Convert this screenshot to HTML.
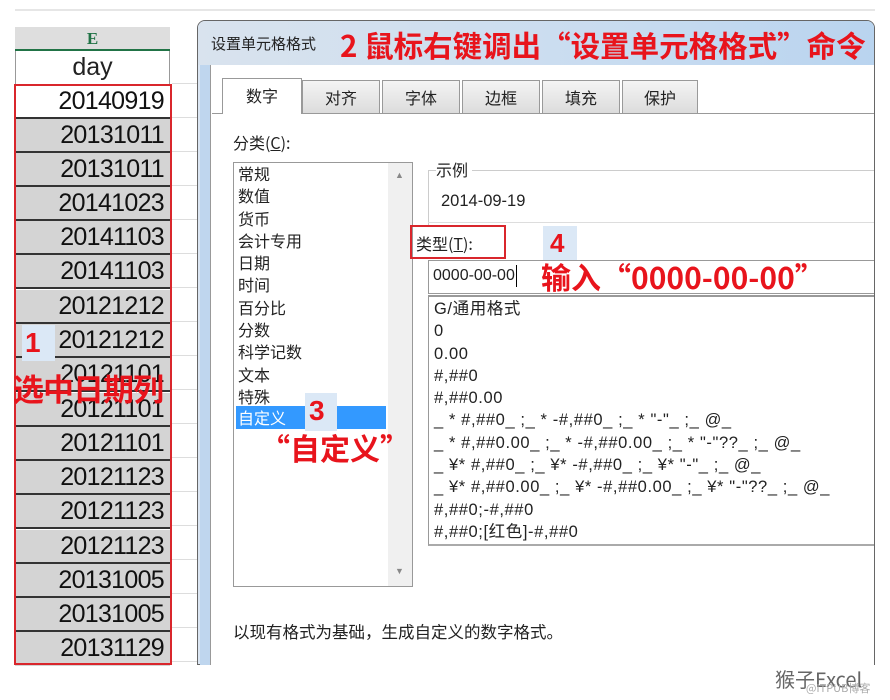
<!DOCTYPE html>
<html><head><meta charset="utf-8"><style>
*{margin:0;padding:0;box-sizing:border-box}
body{width:890px;height:700px;background:#fff;position:relative;overflow:hidden;font-family:"Liberation Sans","Microsoft YaHei","Noto Sans CJK SC",sans-serif;color:#222}
.a{position:absolute}
.row{position:absolute;left:15px;width:155px;height:34px;background:#d4d4d4;border-bottom:2px solid #333;text-align:right;padding-right:6px;font-size:25px;line-height:33px;color:#111;letter-spacing:-0.7px}
.red{color:#e8141c;font-weight:bold;font-family:"Liberation Sans","Noto Sans CJK SC",sans-serif}
.tab{position:absolute;top:80px;height:33px;width:78px;background:linear-gradient(#f4f4f4,#dcdcdc);border:1px solid #999;border-bottom:none;font-size:16px;text-align:center;line-height:32px;font-family:"Noto Sans CJK SC",sans-serif}
.li{font-size:16px;line-height:22.3px;font-family:"Noto Sans CJK SC",sans-serif;color:#222;height:22.3px}
.fl{font-size:16.5px;line-height:22.3px;font-family:"Liberation Sans","Noto Sans CJK SC",sans-serif;color:#222;white-space:nowrap;height:22.3px;letter-spacing:0.6px}
.badge{background:#dbe8f6;}
</style></head><body>
<div class="a" style="left:15px;top:9px;width:860px;height:2px;background:#e6e6e6"></div>
<div class="a" style="left:15px;top:27px;width:155px;height:23px;background:#dedede;text-align:center;color:#217346;font:bold 17px 'Liberation Serif',serif;line-height:24px">E</div>
<div class="a" style="left:15px;top:49px;width:155px;height:2px;background:#217346"></div>
<div class="a" style="left:15px;top:51px;width:155px;height:34px;border-left:1px solid #999;border-right:1px solid #999;text-align:center;font-size:25px;line-height:32px">day</div>
<div class="row" style="top:85px;background:#fff">20140919</div>
<div class="row" style="top:119px">20131011</div>
<div class="row" style="top:153px">20131011</div>
<div class="row" style="top:187px">20141023</div>
<div class="row" style="top:221px">20141103</div>
<div class="row" style="top:255px">20141103</div>
<div class="row" style="top:290px">20121212</div>
<div class="row" style="top:324px">20121212</div>
<div class="row" style="top:358px">20121101</div>
<div class="row" style="top:393px">20121101</div>
<div class="row" style="top:427px">20121101</div>
<div class="row" style="top:461px">20121123</div>
<div class="row" style="top:495px">20121123</div>
<div class="row" style="top:530px">20121123</div>
<div class="row" style="top:564px">20131005</div>
<div class="row" style="top:598px">20131005</div>
<div class="row" style="top:632px;border-bottom:none">20131129</div>
<div class="a" style="left:14px;top:84px;width:158px;height:581px;border:2px solid #d9262c"></div>
<div class="a" style="left:172px;top:50px;width:28px;height:615px;background:repeating-linear-gradient(#fff 0 33px,#ddd 33px 34px)"></div>
<div class="a badge" style="left:22px;top:325px;width:33px;height:36px"></div>
<div class="a red" style="left:25px;top:327px;font-size:28px;line-height:32px">1</div>
<div class="a red" style="left:13px;top:370px;font-size:31px;line-height:36px;font-family:'Noto Sans CJK SC',sans-serif;letter-spacing:-1px">选中日期列</div>

<!-- dialog -->
<div class="a" style="left:197px;top:20px;width:678px;height:645px;border:1px solid #666;border-radius:8px 8px 0 0;background:#dbe6f3"></div>
<div class="a" style="left:198px;top:21px;width:676px;height:44px;border-radius:7px 7px 0 0;background:linear-gradient(90deg,#d9e3ee,#c9dcf0 60%,#b9d4ef)"></div>
<div class="a" style="left:211px;top:33px;font-size:15px;font-family:'Noto Sans CJK SC',sans-serif;color:#222">设置单元格格式</div>
<div class="a red" style="left:340px;top:25px;font-size:29.5px;line-height:40px;font-family:'Noto Sans CJK SC',sans-serif;white-space:nowrap;letter-spacing:0px">2 鼠标右键调出“设置单元格格式”命令</div>
<div class="a" style="left:210px;top:65px;width:664px;height:600px;background:#fff;border-left:1px solid #999"></div>
<div class="a" style="left:200px;top:65px;width:10px;height:600px;background:#bfd6ee"></div>
<div class="tab" style="left:222px;top:78px;height:36px;width:80px;background:#fff;z-index:2">数字</div>
<div class="tab" style="left:302px">对齐</div>
<div class="tab" style="left:382px">字体</div>
<div class="tab" style="left:462px">边框</div>
<div class="tab" style="left:542px">填充</div>
<div class="tab" style="left:622px;width:76px">保护</div>
<div class="a" style="left:212px;top:113px;width:662px;height:1px;background:#999"></div>

<div class="a li" style="left:233px;top:131px">分类(<u>C</u>):</div>
<div class="a" style="left:233px;top:162px;width:180px;height:425px;border:1px solid #999;background:#fff"></div>
<div class="a" style="left:388px;top:163px;width:24px;height:423px;background:#f0f0f0"></div>
<div class="a" style="left:395px;top:170px;font-size:9px;color:#888">▲</div>
<div class="a" style="left:395px;top:566px;font-size:9px;color:#888">▼</div>
<div class="a" style="left:238px;top:162px">
<div class="li">常规</div><div class="li">数值</div><div class="li">货币</div><div class="li">会计专用</div><div class="li">日期</div><div class="li">时间</div><div class="li">百分比</div><div class="li">分数</div><div class="li">科学记数</div><div class="li">文本</div><div class="li">特殊</div></div>
<div class="a" style="left:236px;top:406px;width:150px;height:23px;background:#3399ff"></div>
<div class="a li" style="left:238px;top:406px;color:#fff">自定义</div>
<div class="a badge" style="left:305px;top:393px;width:32px;height:38px"></div>
<div class="a red" style="left:309px;top:395px;font-size:28px;line-height:32px">3</div>
<div class="a red" style="left:260px;top:428px;font-size:30px;line-height:38px;font-family:'Noto Sans CJK SC',sans-serif">“自定义”</div>

<div class="a" style="left:428px;top:170px;width:446px;height:1px;background:#ccc"></div>
<div class="a" style="left:428px;top:170px;width:1px;height:55px;background:#ccc"></div>
<div class="a li" style="left:436px;top:158px;background:#fff;padding-right:4px">示例</div>
<div class="a" style="left:441px;top:192px;font-size:16.5px">2014-09-19</div>
<div class="a" style="left:428px;top:222px;width:446px;height:1px;background:#ddd"></div>
<div class="a li" style="left:416px;top:232px">类型(<u>T</u>):</div>
<div class="a" style="left:410px;top:225px;width:96px;height:34px;border:2px solid #d9262c"></div>
<div class="a badge" style="left:543px;top:226px;width:34px;height:34px"></div>
<div class="a red" style="left:550px;top:227px;font-size:26px;line-height:32px">4</div>
<div class="a" style="left:428px;top:260px;width:446px;height:34px;border:1px solid #999;border-right:none;background:#fff"></div>
<div class="a" style="left:433px;top:265px;font-size:16px;line-height:22px;border-right:1px solid #000;padding-right:1px">0000-00-00</div>
<div class="a red" style="left:541px;top:256px;font-size:30px;line-height:40px;font-family:'Noto Sans CJK SC',sans-serif;white-space:nowrap">输入“0000-00-00”</div>
<div class="a" style="left:428px;top:295px;width:446px;height:251px;border:1px solid #999;border-top:2px solid #999;border-right:none;border-bottom:2px solid #aaa;background:#fff"></div>
<div class="a" style="left:434px;top:298px">
<div class="fl">G/通用格式</div><div class="fl">0</div><div class="fl">0.00</div><div class="fl">#,##0</div><div class="fl">#,##0.00</div>
<div class="fl">_ * #,##0_ ;_ * -#,##0_ ;_ * "-"_ ;_ @_</div>
<div class="fl">_ * #,##0.00_ ;_ * -#,##0.00_ ;_ * "-"??_ ;_ @_</div>
<div class="fl">_ ¥* #,##0_ ;_ ¥* -#,##0_ ;_ ¥* "-"_ ;_ @_</div>
<div class="fl">_ ¥* #,##0.00_ ;_ ¥* -#,##0.00_ ;_ ¥* "-"??_ ;_ @_</div>
<div class="fl">#,##0;-#,##0</div>
<div class="fl">#,##0;[红色]-#,##0</div></div>
<div class="a li" style="left:233px;top:620px;font-size:16.5px">以现有格式为基础，生成自定义的数字格式。</div>
<div class="a" style="left:775px;top:664px;font-size:20px;color:#666;font-family:'Noto Sans CJK SC',sans-serif">猴子Excel</div>
<div class="a" style="left:806px;top:680px;font-size:11px;color:#aaa;font-family:'Noto Sans CJK SC',sans-serif">@ITPUB博客</div>
</body></html>
